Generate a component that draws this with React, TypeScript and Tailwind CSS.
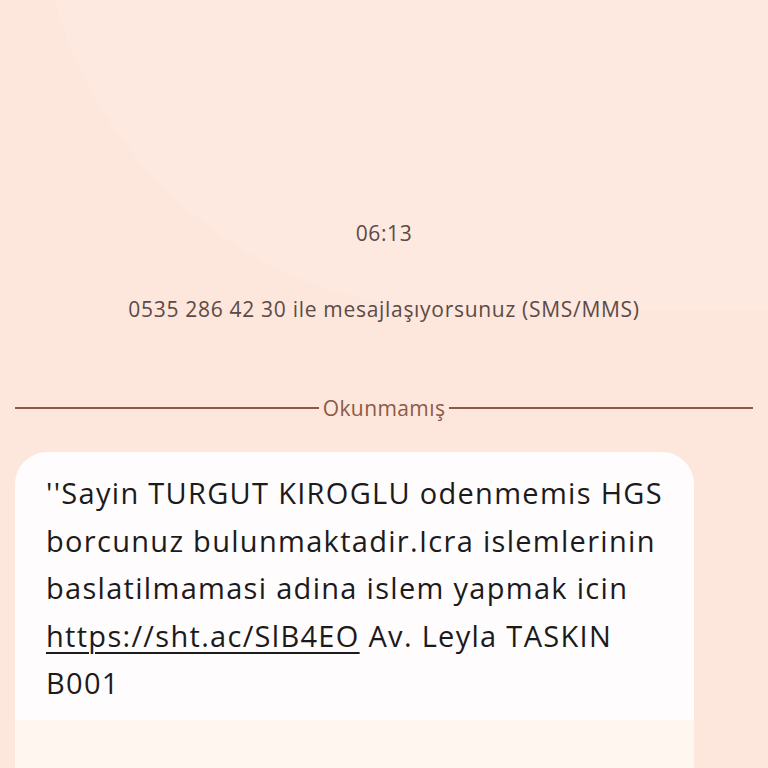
export default function App() {
  return (
    <div
      className="relative w-[768px] h-[768px] overflow-hidden bg-[#fde6dc]"
      style={{ fontFamily: "'Open Sans', 'Noto Sans', sans-serif" }}
    >
      {/* soft background shapes */}
      <div className="absolute left-[40px] -top-[200px] w-[900px] h-[510px] rounded-bl-[420px] bg-[#fee9e0]" />
      <div className="relative flex flex-col">
        <div className="h-[220px]" />
        <p className="text-center text-[21px] leading-[26px] tracking-[0.6px] text-[#5b4b46]">06:13</p>
        <p className="mt-[50px] text-center text-[21px] leading-[26px] tracking-[0.7px] text-[#5b4b46]">
          0535 286 42 30 ile mesajlaşıyorsunuz (SMS/MMS)
        </p>
        <div className="mt-[74px] flex items-center gap-[4px] px-[15px]">
          <div className="flex-1 h-[2px] bg-[#8c5a45]" />
          <span className="text-[21px] leading-[24px] tracking-[0.4px] text-[#8c5a45]">Okunmamış</span>
          <div className="flex-1 h-[2px] bg-[#8c5a45]" />
        </div>
        <div className="mt-[32px] ml-[15px] w-[679px] rounded-t-[32px] bg-[#fffcfd] overflow-hidden">
          <p className="pl-[31px] pr-[20px] pt-[17px] pb-[13px] text-[29px] leading-[47.5px] tracking-[1.3px] text-[#1c1b1b]">
            ''Sayin TURGUT KIROGLU odenmemis HGS borcunuz bulunmaktadir.Icra islemlerinin
            baslatilmamasi adina islem yapmak icin{" "}
            <span className="underline decoration-[2px] underline-offset-[5px]">https://sht.ac/SlB4EO</span>{" "}
            Av. Leyla TASKIN B001
          </p>
          <div className="h-[120px] bg-[#fff6ef]" />
        </div>
      </div>
    </div>
  );
}
